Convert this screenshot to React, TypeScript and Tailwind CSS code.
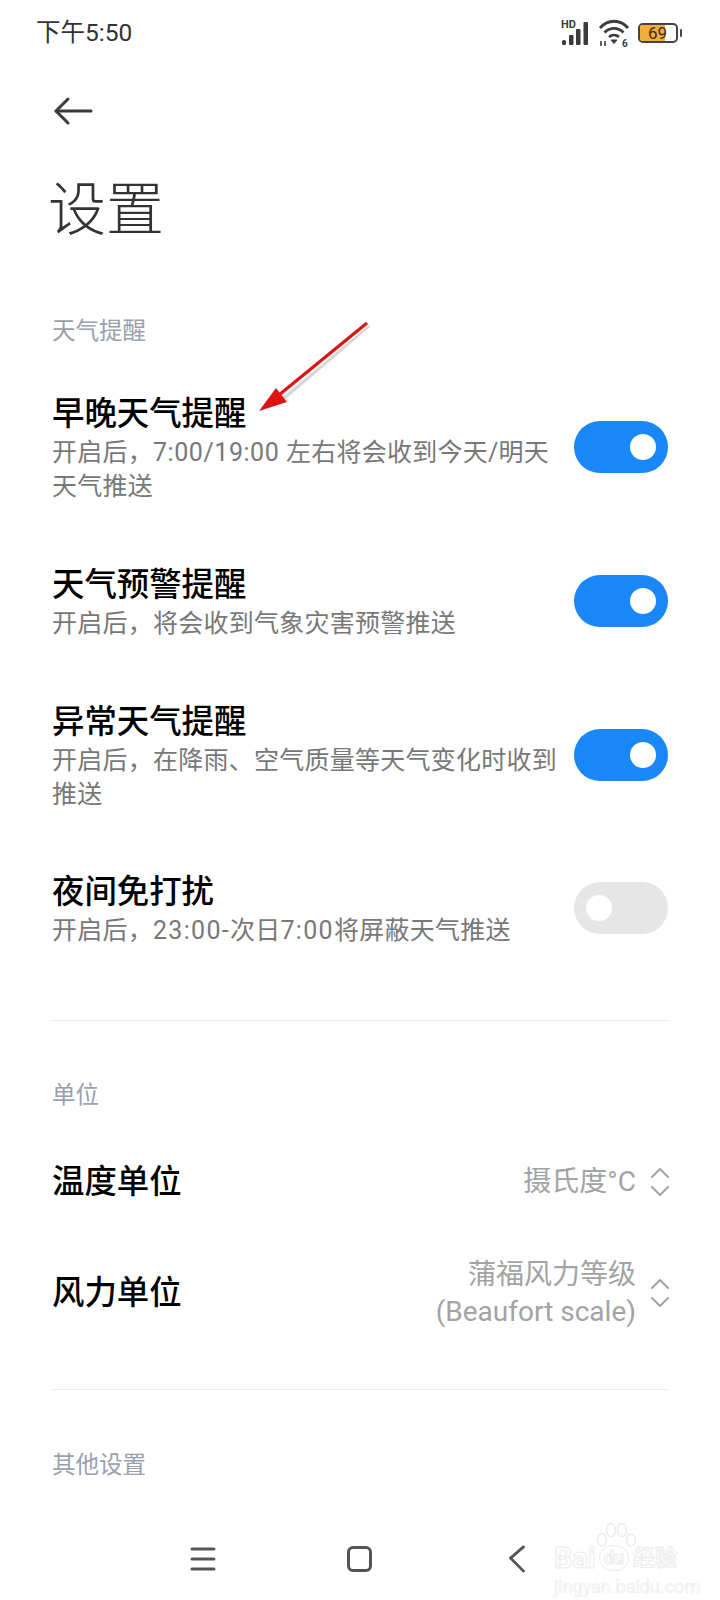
import type { ReactNode } from "react";

const font = { fontFamily: 'Roboto, "Noto Sans CJK SC", sans-serif' };

const Toggle = ({ on }: { on: boolean }) => (
  <div
    className={`mb-[4px] flex h-[52px] w-[94px] shrink-0 items-center rounded-full ${
      on ? "justify-end bg-[#1a87f8] pr-[12px]" : "justify-start bg-[#e6e6e6] pl-[12px]"
    }`}
  >
    <div className="h-[26px] w-[26px] rounded-full bg-white" />
  </div>
);

const Updown = () => (
  <svg width="20" height="30" viewBox="0 0 20 30" fill="none" stroke="#a3a3a3" strokeWidth="2" strokeLinecap="round" strokeLinejoin="round" className="-mr-[2px] shrink-0">
    <path d="M2 10 L10 2 L18 10" />
    <path d="M2 20 L10 28 L18 20" />
  </svg>
);

const SectionTitle = ({ children, className }: { children: string; className: string }) => (
  <div className={`text-[23.5px] leading-[32px] text-[#9aa0ad] ${className}`}>{children}</div>
);

const ToggleRow = ({ title, sub, on, className }: { title: string; sub: ReactNode[]; on: boolean; className: string }) => (
  <div className={`flex items-center justify-between ${className}`}>
    <div className="w-[505px]">
      <div className="text-[32.4px] font-medium leading-[43px] text-black">{title}</div>
      {sub.map((line, i) => (
        <div key={i} className="whitespace-nowrap text-[25px] leading-[34px] tracking-[0.25px] text-[#787878]">
          {line}
        </div>
      ))}
    </div>
    <Toggle on={on} />
  </div>
);

export default function App() {
  return (
    <div className="relative h-[1600px] w-[720px] overflow-hidden bg-white" style={font}>
      {/* status bar */}
      <div className="flex h-[66px] items-center justify-between pl-[36px] pr-[38px]">
        <span className="text-[24.5px] text-[#333]">下午5:50</span>
        <div className="flex items-center gap-[5px]">
          <svg width="32" height="28" viewBox="0 0 32 28" fill="#3c3c3c">
            <text x="0" y="9" fontSize="11" fontWeight="700" fontFamily="Roboto">HD</text>
            <rect x="1" y="21" width="4" height="5" rx="1.5" />
            <rect x="8" y="16" width="4.5" height="10" rx="1" />
            <rect x="15" y="10" width="4.5" height="16" rx="1" />
            <rect x="22.5" y="3" width="4.5" height="23" rx="1" />
          </svg>
          <svg width="32" height="28" viewBox="0 0 32 28" fill="none" stroke="#3c3c3c" strokeWidth="2.8">
            <path d="M2 9 C10 0 22 0 30 9" />
            <path d="M6.5 13.5 C12 8 20 8 25.5 13.5" />
            <path d="M11 18 C14 15.5 18 15.5 21 18" />
            <path d="M13 21 L16 24.5 L19 21 Z" fill="#3c3c3c" strokeWidth="1" />
            <path d="M3 27 v-5 M7 27 v-5" strokeWidth="1.6" />
            <text x="24" y="27.5" fontSize="10" fontWeight="700" fill="#3c3c3c" stroke="none" fontFamily="Roboto">6</text>
          </svg>
          <div className="ml-[3px] flex items-center gap-[2px]">
            <div className="relative flex h-[20px] w-[40px] items-center overflow-hidden rounded-[5px] border-2 border-[#444] bg-white">
              <div className="h-full w-[25px] bg-[#f3ad3c]" />
              <span className="absolute left-[8px] text-[17px] leading-none text-[#3a2a10]">69</span>
            </div>
            <div className="h-[8px] w-[2px] rounded-full bg-[#444]" />
          </div>
        </div>
      </div>

      {/* header */}
      <div className="px-[52px]">
        <svg width="42" height="30" viewBox="0 0 42 30" fill="none" stroke="#3a3a3a" strokeWidth="3" strokeLinecap="round" strokeLinejoin="round" className="mt-[30px]">
          <path d="M16 3 L4 15 L16 27" />
          <path d="M4 15 H39" />
        </svg>
        <h1 className="mt-[46px] -ml-[4px] text-[58px] font-light leading-[76px] text-[#333]">设置</h1>

        <SectionTitle className="mt-[67px]">天气提醒</SectionTitle>
        <ToggleRow
          className="mt-[46px]"
          title="早晚天气提醒"
          sub={[
            <>
              开启后，<span className="tracking-[0.55px]">7:00/19:00 </span>左右将会收到今天/明天
            </>,
            "天气推送",
          ]}
          on
        />
        <ToggleRow className="mt-[60px]" title="天气预警提醒" sub={["开启后，将会收到气象灾害预警推送"]} on />
        <ToggleRow
          className="mt-[60px]"
          title="异常天气提醒"
          sub={["开启后，在降雨、空气质量等天气变化时收到", "推送"]}
          on
        />
        <ToggleRow
          className="mt-[59px]"
          title="夜间免打扰"
          sub={[
            <>
              开启后，<span className="tracking-[1.3px]">23:00-</span>次日<span className="tracking-[1.3px]">7:00</span>将屏蔽天气推送
            </>,
          ]}
          on={false}
        />

        <div className="mt-[72px] -mr-[1px] h-px bg-[#ececec]" />

        <SectionTitle className="mt-[58px]">单位</SectionTitle>
        <div className="mt-[50px] flex h-[42px] items-center justify-between">
          <div className="text-[32.4px] font-medium text-black">温度单位</div>
          <div className="flex items-center gap-[14px]">
            <span className="text-[28px] text-[#a3a3a3]">摄氏度°C</span>
            <Updown />
          </div>
        </div>
        <div className="mt-[53px] flex items-center justify-between">
          <div className="text-[32.4px] font-medium text-black">风力单位</div>
          <div className="flex items-center gap-[14px]">
            <div className="text-right text-[28px] leading-[37px] text-[#a3a3a3]">
              <div>蒲福风力等级</div>
              <div>(Beaufort scale)</div>
            </div>
            <Updown />
          </div>
        </div>

        <div className="mt-[59px] -mr-[1px] h-px bg-[#ececec]" />
        <SectionTitle className="mt-[59px]">其他设置</SectionTitle>
      </div>

      {/* nav bar */}
      <div className="absolute bottom-[27px] left-[190px] flex h-[28px] w-[336px] items-center justify-between">
        <svg width="26" height="26" viewBox="0 0 26 26" stroke="#555" strokeWidth="3" strokeLinecap="round">
          <path d="M2 3 H24 M2 13 H24 M2 23 H24" />
        </svg>
        <div className="-ml-[5px] h-[26px] w-[25px] rounded-[6px] border-[3px] border-[#555]" />
        <svg width="18" height="28" viewBox="0 0 18 30" fill="none" stroke="#555" strokeWidth="3" strokeLinecap="round" strokeLinejoin="round">
          <path d="M16 2 L2 14 L16 28" />
        </svg>
      </div>

      {/* annotation arrow */}
      <svg width="130" height="110" viewBox="0 0 130 110" className="absolute left-[250px] top-[315px]">
        <path d="M119 10 L28 86 L31 88 L120 12 Z" fill="#bbb" opacity="0.6" />
        <path d="M117 8 L24 84" stroke="#dc1414" strokeWidth="3.2" />
        <path d="M9 96 L37 87 L26 73 Z" fill="#dc1414" />
      </svg>

      {/* baidu watermark */}
      <div className="absolute left-[554px] top-[1522px] w-[135px] text-white">
        <svg width="40" height="34" viewBox="0 0 40 34" fill="none" stroke="#ececec" strokeWidth="1.5" className="absolute left-[42px] top-0">
          <ellipse cx="6" cy="18" rx="4.5" ry="6" />
          <ellipse cx="15" cy="8" rx="4.5" ry="6.5" />
          <ellipse cx="26" cy="8" rx="4.5" ry="6.5" />
          <ellipse cx="35" cy="18" rx="4.5" ry="6" />
        </svg>
        <div className="mt-[20px] flex items-center whitespace-nowrap text-[29px] font-bold leading-[32px] [-webkit-text-stroke:1px_#ececec]">
          <span>Bai</span>
          <span className="ml-[3px] rounded-full border border-[#ececec] px-[4px] text-[18px] leading-[24px]">du</span>
          <span className="ml-[4px] text-[22px]">经验</span>
        </div>
        <div className="mt-[3px] whitespace-nowrap text-[18px] leading-[20px] [-webkit-text-stroke:0.6px_#ececec]">jingyan.baidu.com</div>
      </div>
    </div>
  );
}
